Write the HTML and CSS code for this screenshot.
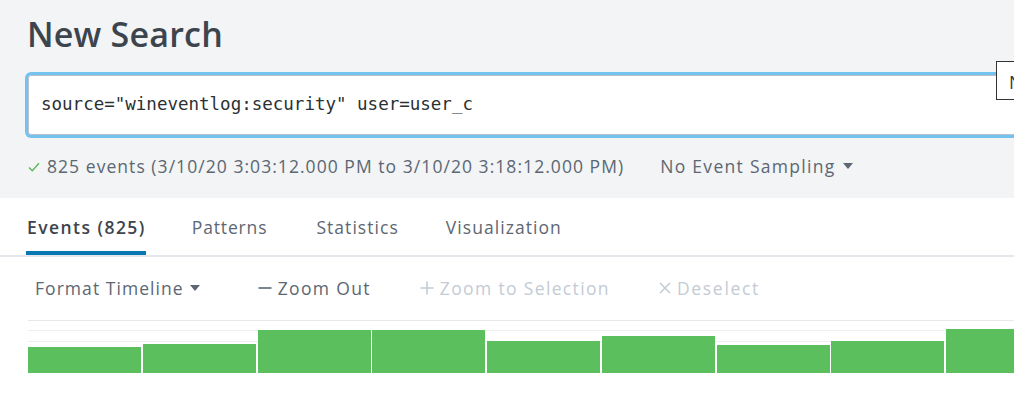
FILE: index.html
```html
<!DOCTYPE html>
<html>
<head>
<meta charset="utf-8">
<link rel="stylesheet" href="styles.css">
</head>
<body>
<div class="page">
  <header class="header">
    <h1 class="title">New Search</h1>
    <div class="search-wrap">
      <div class="search">source="wineventlog:security" user=user_c</div>
      <div class="tip">N</div>
    </div>
    <div class="status">
      <span class="status-main"><svg class="check" width="12" height="10" viewBox="0 0 12 10"><path d="M1 5.5 L4.3 8.8 L11 1.2" fill="none" stroke="#5cb85c" stroke-width="1.4"/></svg>825 events (3/10/20 3:03:12.000 PM to 3/10/20 3:18:12.000 PM)</span>
      <span class="sampling">No Event Sampling<span class="caret"></span></span>
    </div>
  </header>
  <nav class="tabs">
    <span class="tab active">Events (825)</span>
    <span class="tab">Patterns</span>
    <span class="tab">Statistics</span>
    <span class="tab">Visualization</span>
  </nav>
  <div class="toolbar">
    <span class="tool">Format Timeline<span class="caret"></span></span>
    <span class="tool"><svg class="sym" width="14" height="14" viewBox="0 0 14 14"><path d="M0.5 7 H13.5" stroke="currentColor" stroke-width="1.6"/></svg>Zoom Out</span>
    <span class="tool disabled"><svg class="sym" width="14" height="14" viewBox="0 0 14 14"><path d="M0.5 7 H13.5 M7 0.5 V13.5" stroke="currentColor" stroke-width="1.6"/></svg>Zoom to Selection</span>
    <span class="tool disabled"><svg class="sym" width="12" height="12" viewBox="0 0 12 12"><path d="M1 1 L11 11 M11 1 L1 11" stroke="currentColor" stroke-width="1.5"/></svg>Deselect</span>
  </div>
  <div class="chart">
    <div class="bar" style="height:26px"></div>
    <div class="bar" style="height:29px"></div>
    <div class="bar" style="height:43px"></div>
    <div class="bar" style="height:43px"></div>
    <div class="bar" style="height:32px"></div>
    <div class="bar" style="height:37px"></div>
    <div class="bar" style="height:28px"></div>
    <div class="bar" style="height:32px"></div>
    <div class="bar" style="height:44px"></div>
  </div>
</div>
</body>
</html>
```

FILE: styles.css
```css
html, body {
  margin: 0;
  padding: 0;
  background: #ffffff;
  overflow: hidden;
}
.page {
  width: 1014px;
  height: 414px;
  overflow: hidden;
  font-family: "Open Sans", "Liberation Sans", sans-serif;
  color: #5c6773;
}
.header {
  background: #f2f4f5;
  height: 198px;
  padding-top: 1px;
  box-sizing: border-box;
}
.title {
  margin: 10px 0 0 27px;
  font-size: 34px;
  font-weight: 600;
  color: #3c444d;
  line-height: 46px;
  letter-spacing: 0.2px;
}
.search-wrap {
  position: relative;
  margin-top: 18px;
  margin-left: 28px;
}
.search {
  width: 1100px;
  height: 58px;
  box-sizing: content-box;
  border: 1px solid #b9c2cc;
  border-radius: 3px;
  box-shadow: 0 0 0 3px #74c3ef;
  background: #ffffff;
  font-family: "DejaVu Sans Mono", "Liberation Mono", monospace;
  font-size: 17.5px;
  color: #2b3033;
  line-height: 56px;
  padding-left: 12px;
}
.tip {
  position: absolute;
  left: 968px;
  top: -14px;
  width: 60px;
  height: 37px;
  background: #ffffff;
  border: 1px solid #333333;
  font-size: 18px;
  color: #333;
  padding-left: 12px;
  line-height: 40px;
}
.status {
  display: flex;
  align-items: center;
  margin: 17px 0 0 28px;
  font-size: 17.5px;
  letter-spacing: 1.05px;
  height: 28px;
}
.check {
  margin-right: 7px;
  vertical-align: 1px;
}
.sampling {
  margin-left: 36px;
  display: inline-flex;
  align-items: center;
  letter-spacing: 1.3px;
}
.caret {
  display: inline-block;
  width: 0;
  height: 0;
  border-left: 5px solid transparent;
  border-right: 5px solid transparent;
  border-top: 6px solid #5c6773;
  margin-left: 7px;
}
.tabs {
  display: flex;
  height: 59px;
  border-bottom: 2px solid #e4e8ec;
  box-sizing: border-box;
  padding-left: 27px;
  gap: 47px;
  font-size: 17.5px;
  letter-spacing: 1.05px;
}
.tab {
  display: flex;
  align-items: center;
  height: 57px;
  box-sizing: border-box;
  border-bottom: 4px solid transparent;
  padding-top: 5px;
  color: #5c6773;
}
.tab:nth-child(2) { margin-left: -1px; margin-right: 2px; letter-spacing: 0.85px; }
.tab.active {
  border-bottom-color: #0a77b5;
  color: #3c444d;
  font-weight: 600;
  letter-spacing: 1.45px;
  margin-left: -1px;
  padding-left: 1px;
}
.toolbar {
  display: flex;
  align-items: center;
  height: 63px;
  padding-bottom: 2px;
  box-sizing: border-box;
  padding-left: 35px;
  gap: 49px;
  font-size: 17.5px;
  letter-spacing: 1.35px;
}
.tool {
  display: inline-flex;
  align-items: center;
  color: #5c6773;
}
.tool:first-child { letter-spacing: 1.05px; }
.tool:last-child { letter-spacing: 1.7px; }
.tool .caret { margin-left: 6px; margin-right: 9px; }
.tool.disabled { color: #c3cbd4; }
.sym {
  margin-right: 6px;
}
.chart {
  margin-left: 28px;
  height: 53px;
  display: flex;
  align-items: flex-end;
  gap: 1.75px;
  background:
    linear-gradient(#e6e8ea, #e6e8ea) 0 0 / 100% 1px no-repeat,
    linear-gradient(#eceef0, #eceef0) 0 10px / 100% 1px no-repeat,
    linear-gradient(#eceef0, #eceef0) 0 21px / 100% 1px no-repeat;
}
.bar {
  flex: 0 0 113px;
  background: #5cbf5e;
}
```
